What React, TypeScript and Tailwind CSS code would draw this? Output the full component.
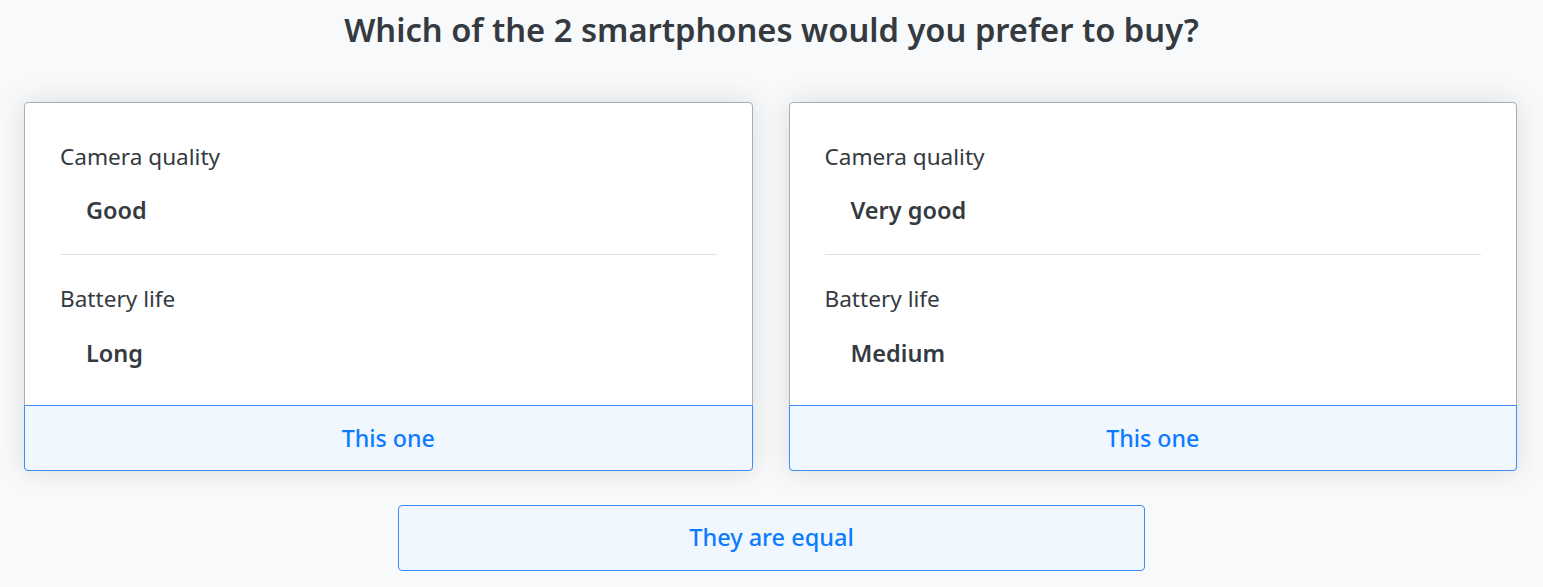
import React from "react";

const cards = [
  { cam: "Good", bat: "Long" },
  { cam: "Very good", bat: "Medium" },
];

function Card({ cam, bat }: { cam: string; bat: string }) {
  return (
    <div className="flex flex-col rounded-[4px] border border-[#a9aeb3] bg-white shadow-[0_0_28px_rgba(0,0,0,0.12)]">
      <div className="px-[35px] pt-[39px] pb-[37px]">
        <div className="text-[22.6px] leading-[30px] text-[#343a40]">Camera quality</div>
        <div className="mt-[23px] pl-[26px] text-[23.5px] leading-[30px] font-semibold text-[#343a40]">{cam}</div>
        <div className="mt-[29px] border-t border-[#dee2e6]" />
        <div className="mt-[29px] text-[22.6px] leading-[30px] text-[#343a40]">Battery life</div>
        <div className="mt-[24px] pl-[26px] text-[23.5px] leading-[30px] font-semibold text-[#343a40]">{bat}</div>
      </div>
      <button className="-mx-px -mb-px h-[66px] rounded-b-[4px] border border-[#3d8ef8] bg-[#f0f7ff] text-[23.2px] font-medium text-[#0d7bff]">
        This one
      </button>
    </div>
  );
}

export default function App() {
  return (
    <div
      className="min-h-[587px] bg-[#f8f9fa] px-[24px] pt-[10px] pb-[17px]"
      style={{ fontFamily: '"Noto Sans", sans-serif' }}
    >
      <h1 className="text-center text-[32.7px] leading-[40px] font-semibold text-[#343a40]">
        Which of the 2 smartphones would you prefer to buy?
      </h1>
      <div className="mt-[52px] grid grid-cols-2 gap-[36px] pr-[2px]">
        {cards.map((c, i) => (
          <Card key={i} cam={c.cam} bat={c.bat} />
        ))}
      </div>
      <div className="mt-[34px] flex justify-center">
        <button className="h-[66px] w-[747px] rounded-[4px] border border-[#3d8ef8] bg-[#f0f7ff] text-[23.5px] font-medium text-[#0d7bff]">
          They are equal
        </button>
      </div>
    </div>
  );
}
